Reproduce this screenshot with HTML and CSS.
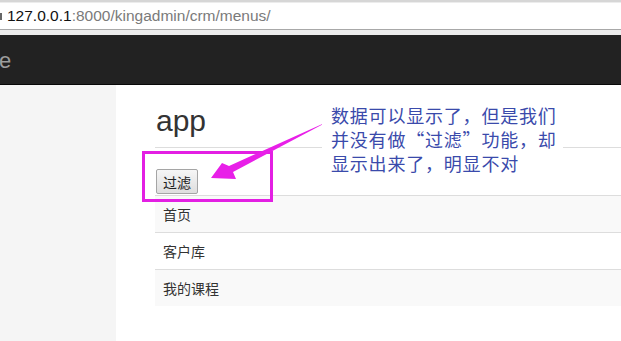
FILE: index.html
```html
<!DOCTYPE html>
<html lang="zh-CN">
<head>
    <meta charset="UTF-8">
    <meta name="viewport" content="width=device-width, initial-scale=1.0">
    <title>kingadmin - menus</title>
    <link rel="stylesheet" href="styles.css">
</head>
<body>
    <div class="chrome">
        <div class="address">
            <span class="site-icon"></span>
            <span class="host">127.0.0.1</span><span class="path">:8000/kingadmin/crm/menus/</span>
        </div>
    </div>

    <div class="navbar">
        <span class="brand">e</span>
    </div>

    <div class="page">
        <div class="sidebar"></div>
        <div class="main">
            <h2 class="app-title">app</h2>
            <div class="filter-row">
                <button type="button" class="filter-btn">过滤</button>
            </div>
            <table class="menu-table">
                <tr><td>首页</td></tr>
                <tr><td>客户库</td></tr>
                <tr><td>我的课程</td></tr>
            </table>
        </div>
    </div>

    <!-- screenshot annotation -->
    <div class="mark-box"></div>
    <svg class="mark-arrow" viewBox="200 110 140 80" width="140" height="80">
        <polygon points="211,178 222,163 229,166 329,121 233,172 236,179" fill="#e81fe8"/>
    </svg>
    <div class="note">数据可以显示了，但是我们<br>并没有做“过滤”功能，却<br>显示出来了，明显不对</div>
</body>
</html>
```

FILE: styles.css
```css
body {
    margin: 0;
    font-family: "Liberation Sans", "Noto Sans CJK SC", sans-serif;
    font-size: 14px;
    color: #333;
    background-color: #fff;
    overflow: hidden;
}

.chrome {
    height: 35px;
    background-color: #ececec;
    border-top: 2px solid #d6d6d6;
    box-sizing: border-box;
    padding-top: 1px;
}

.address {
    height: 26px;
    background-color: #fff;
    border-bottom: 1px solid #a8a8a8;
    display: flex;
    align-items: center;
    font-size: 15.5px;
    white-space: nowrap;
}

.site-icon {
    display: inline-block;
    width: 2px;
    height: 7px;
    background-color: #666;
    margin-right: 5px;
}

.host {
    color: #111;
}

.path {
    color: #7a7a7a;
}

.navbar {
    height: 49px;
    background-color: #222;
    border-bottom: 1px solid #080808;
    display: flex;
    align-items: center;
}

.brand {
    color: #9d9d9d;
    font-size: 22px;
    margin-left: -1px;
    margin-top: 2px;
}

.page {
    display: flex;
    height: 256px;
}

.sidebar {
    width: 116px;
    background-color: #f5f5f5;
}

.main {
    flex: 1;
    padding-left: 39px;
}

.app-title {
    margin: 19px 0 10px 1px;
    font-size: 30px;
    line-height: 33px;
    font-weight: normal;
    color: #333;
}

.filter-row {
    border-top: 1px solid #ddd;
    padding: 21px 0 0 1px;
    height: 25px;
}

.filter-btn {
    height: 25px;
    padding: 0 6px;
    font-family: "Noto Sans CJK SC", sans-serif;
    font-size: 14px;
    color: #222;
    background: linear-gradient(#f6f6f6, #dedede);
    border: 1px solid #a5a5a5;
    border-radius: 2px;
}

.menu-table {
    width: 100%;
    border-collapse: collapse;
    margin-top: 1px;
}

.menu-table td {
    border-top: 1px solid #ddd;
    padding: 8px;
    line-height: 20px;
    font-family: "Noto Sans CJK SC", sans-serif;
}

.menu-table tr:nth-child(odd) td {
    background-color: #f9f9f9;
}

.mark-box {
    position: absolute;
    left: 142px;
    top: 151px;
    width: 131px;
    height: 51px;
    box-sizing: border-box;
    border: 3px solid #e31fe3;
}

.mark-arrow {
    position: absolute;
    left: 200px;
    top: 110px;
}

.note {
    position: absolute;
    left: 322px;
    top: 97px;
    padding: 6px 6px 4px 9px;
    background-color: #fff;
    color: #3a4aab;
    font-family: "Noto Sans CJK SC", sans-serif;
    font-size: 18px;
    line-height: 24px;
    letter-spacing: 0.8px;
    white-space: nowrap;
}
```
